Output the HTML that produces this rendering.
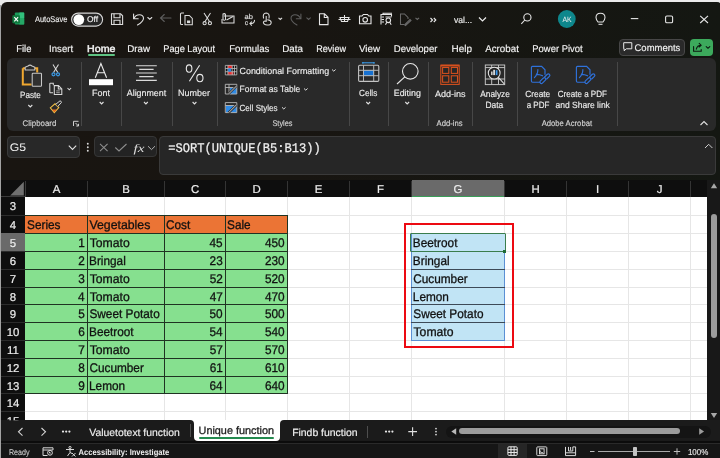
<!DOCTYPE html><html><head><meta charset="utf-8"><style>
*{margin:0;padding:0;box-sizing:border-box}
html,body{width:720px;height:458px;overflow:hidden;background:#ebebeb;font-family:"Liberation Sans",sans-serif}
.a{position:absolute}
#win{position:absolute;left:1px;top:1.8px;width:721px;height:457px;border-top-left-radius:6px;border-top-right-radius:5px;background:linear-gradient(90deg,#191511 0%,#181511 40%,#141712 100%)}
svg#ov{position:absolute;left:0;top:0;text-rendering:geometricPrecision;will-change:transform}
</style></head><body>
<div class="a" style="left:0;top:5px;width:1px;height:453px;background:#a3a3a3"></div>
<div id="win"></div>
<div class="a" style="left:88.00px;top:54.20px;width:27.00px;height:1.90px;background:#5ec383;border-radius:1px"></div>
<div class="a" style="left:619.00px;top:38.50px;width:66.00px;height:17.20px;border:1px solid #474747;border-radius:4px;background:#2a2a2a"></div>
<div class="a" style="left:690.00px;top:38.50px;width:23.00px;height:17.20px;border-radius:4px;background:#3caa5c"></div>
<div class="a" style="left:7.00px;top:58.30px;width:708.60px;height:72.70px;border-radius:6px;background:#292929"></div>
<div class="a" style="left:81.30px;top:62.00px;width:1.00px;height:64.00px;background:#474747"></div>
<div class="a" style="left:120.80px;top:62.00px;width:1.00px;height:64.00px;background:#474747"></div>
<div class="a" style="left:172.40px;top:62.00px;width:1.00px;height:64.00px;background:#474747"></div>
<div class="a" style="left:216.50px;top:62.00px;width:1.00px;height:64.00px;background:#474747"></div>
<div class="a" style="left:348.60px;top:62.00px;width:1.00px;height:64.00px;background:#474747"></div>
<div class="a" style="left:388.00px;top:62.00px;width:1.00px;height:64.00px;background:#474747"></div>
<div class="a" style="left:427.80px;top:62.00px;width:1.00px;height:64.00px;background:#474747"></div>
<div class="a" style="left:472.40px;top:62.00px;width:1.00px;height:64.00px;background:#474747"></div>
<div class="a" style="left:516.80px;top:62.00px;width:1.00px;height:64.00px;background:#474747"></div>
<div class="a" style="left:616.60px;top:62.00px;width:1.00px;height:64.00px;background:#474747"></div>
<div class="a" style="left:7.00px;top:136.00px;width:73.00px;height:21.70px;border:1px solid #3a3a3a;border-radius:4px;background:#282828"></div>
<div class="a" style="left:94.40px;top:136.40px;width:62.30px;height:21.00px;border:1px solid #363636;border-radius:4px;background:#232323"></div>
<div class="a" style="left:159.30px;top:136.40px;width:556.60px;height:38.80px;border:1px solid #3a3a3a;border-radius:4px;background:#262626"></div>
<div class="a" style="left:1.00px;top:180.00px;width:706.00px;height:17.00px;background:#0e0e0e"></div>
<div class="a" style="left:707.00px;top:180.00px;width:13.00px;height:240.30px;background:#181818"></div>
<div class="a" style="left:1.00px;top:197.00px;width:24.00px;height:223.30px;background:#0e0e0e"></div>
<div class="a" style="left:25.00px;top:197.00px;width:682.00px;height:223.30px;background:#ffffff"></div>
<div class="a" style="left:1.00px;top:196.30px;width:24.00px;height:1.00px;background:#3a3a3a"></div>
<div class="a" style="left:24.60px;top:180.50px;width:1.00px;height:16.00px;background:#3a3a3a"></div>
<div class="a" style="left:87.00px;top:181.00px;width:1.00px;height:15.50px;background:#343434"></div>
<div class="a" style="left:164.00px;top:181.00px;width:1.00px;height:15.50px;background:#343434"></div>
<div class="a" style="left:225.00px;top:181.00px;width:1.00px;height:15.50px;background:#343434"></div>
<div class="a" style="left:287.00px;top:181.00px;width:1.00px;height:15.50px;background:#343434"></div>
<div class="a" style="left:349.00px;top:181.00px;width:1.00px;height:15.50px;background:#343434"></div>
<div class="a" style="left:411.00px;top:181.00px;width:1.00px;height:15.50px;background:#343434"></div>
<div class="a" style="left:412.00px;top:180.00px;width:92.00px;height:17.00px;background:#6a6a6a"></div>
<div class="a" style="left:504.00px;top:181.00px;width:1.00px;height:15.50px;background:#343434"></div>
<div class="a" style="left:566.00px;top:181.00px;width:1.00px;height:15.50px;background:#343434"></div>
<div class="a" style="left:628.00px;top:181.00px;width:1.00px;height:15.50px;background:#343434"></div>
<div class="a" style="left:690.00px;top:181.00px;width:1.00px;height:15.50px;background:#343434"></div>
<div class="a" style="left:412.00px;top:195.80px;width:92.00px;height:1.30px;background:#3a9d58"></div>
<div class="a" style="left:1.00px;top:215.00px;width:24.00px;height:1.00px;background:#2c2c2c"></div>
<div class="a" style="left:1.00px;top:233.00px;width:24.00px;height:1.00px;background:#2c2c2c"></div>
<div class="a" style="left:1.00px;top:233.00px;width:24.00px;height:19.00px;background:#6a6a6a"></div>
<div class="a" style="left:1.00px;top:251.00px;width:24.00px;height:1.00px;background:#2c2c2c"></div>
<div class="a" style="left:1.00px;top:269.00px;width:24.00px;height:1.00px;background:#2c2c2c"></div>
<div class="a" style="left:1.00px;top:287.00px;width:24.00px;height:1.00px;background:#2c2c2c"></div>
<div class="a" style="left:1.00px;top:304.00px;width:24.00px;height:1.00px;background:#2c2c2c"></div>
<div class="a" style="left:1.00px;top:322.00px;width:24.00px;height:1.00px;background:#2c2c2c"></div>
<div class="a" style="left:1.00px;top:340.00px;width:24.00px;height:1.00px;background:#2c2c2c"></div>
<div class="a" style="left:1.00px;top:358.00px;width:24.00px;height:1.00px;background:#2c2c2c"></div>
<div class="a" style="left:1.00px;top:376.00px;width:24.00px;height:1.00px;background:#2c2c2c"></div>
<div class="a" style="left:1.00px;top:393.00px;width:24.00px;height:1.00px;background:#2c2c2c"></div>
<div class="a" style="left:1.00px;top:411.00px;width:24.00px;height:1.00px;background:#2c2c2c"></div>
<div class="a" style="left:1.00px;top:429.00px;width:24.00px;height:1.00px;background:#2c2c2c"></div>
<div class="a" style="left:24.50px;top:233.00px;width:1.10px;height:18.00px;background:#3a9d58"></div>
<div class="a" style="left:25.00px;top:215.00px;width:682.00px;height:1.00px;background:#e6e6e6"></div>
<div class="a" style="left:25.00px;top:233.00px;width:682.00px;height:1.00px;background:#e6e6e6"></div>
<div class="a" style="left:25.00px;top:251.00px;width:682.00px;height:1.00px;background:#e6e6e6"></div>
<div class="a" style="left:25.00px;top:269.00px;width:682.00px;height:1.00px;background:#e6e6e6"></div>
<div class="a" style="left:25.00px;top:287.00px;width:682.00px;height:1.00px;background:#e6e6e6"></div>
<div class="a" style="left:25.00px;top:304.00px;width:682.00px;height:1.00px;background:#e6e6e6"></div>
<div class="a" style="left:25.00px;top:322.00px;width:682.00px;height:1.00px;background:#e6e6e6"></div>
<div class="a" style="left:25.00px;top:340.00px;width:682.00px;height:1.00px;background:#e6e6e6"></div>
<div class="a" style="left:25.00px;top:358.00px;width:682.00px;height:1.00px;background:#e6e6e6"></div>
<div class="a" style="left:25.00px;top:376.00px;width:682.00px;height:1.00px;background:#e6e6e6"></div>
<div class="a" style="left:25.00px;top:393.00px;width:682.00px;height:1.00px;background:#e6e6e6"></div>
<div class="a" style="left:25.00px;top:411.00px;width:682.00px;height:1.00px;background:#e6e6e6"></div>
<div class="a" style="left:25.00px;top:429.00px;width:682.00px;height:1.00px;background:#e6e6e6"></div>
<div class="a" style="left:87.00px;top:197.00px;width:1.00px;height:223.30px;background:#e6e6e6"></div>
<div class="a" style="left:164.00px;top:197.00px;width:1.00px;height:223.30px;background:#e6e6e6"></div>
<div class="a" style="left:225.00px;top:197.00px;width:1.00px;height:223.30px;background:#e6e6e6"></div>
<div class="a" style="left:287.00px;top:197.00px;width:1.00px;height:223.30px;background:#e6e6e6"></div>
<div class="a" style="left:349.00px;top:197.00px;width:1.00px;height:223.30px;background:#e6e6e6"></div>
<div class="a" style="left:411.00px;top:197.00px;width:1.00px;height:223.30px;background:#e6e6e6"></div>
<div class="a" style="left:504.00px;top:197.00px;width:1.00px;height:223.30px;background:#e6e6e6"></div>
<div class="a" style="left:566.00px;top:197.00px;width:1.00px;height:223.30px;background:#e6e6e6"></div>
<div class="a" style="left:628.00px;top:197.00px;width:1.00px;height:223.30px;background:#e6e6e6"></div>
<div class="a" style="left:690.00px;top:197.00px;width:1.00px;height:223.30px;background:#e6e6e6"></div>
<div class="a" style="left:25.00px;top:215.00px;width:263.00px;height:18.00px;background:#eb7435"></div>
<div class="a" style="left:25.00px;top:233.00px;width:263.00px;height:160.00px;background:#86e08f"></div>
<div class="a" style="left:25.00px;top:215.00px;width:263.00px;height:1.00px;background:#1f3322"></div>
<div class="a" style="left:25.00px;top:233.00px;width:263.00px;height:1.00px;background:#1f3322"></div>
<div class="a" style="left:25.00px;top:251.00px;width:263.00px;height:1.00px;background:#1f3322"></div>
<div class="a" style="left:25.00px;top:269.00px;width:263.00px;height:1.00px;background:#1f3322"></div>
<div class="a" style="left:25.00px;top:287.00px;width:263.00px;height:1.00px;background:#1f3322"></div>
<div class="a" style="left:25.00px;top:304.00px;width:263.00px;height:1.00px;background:#1f3322"></div>
<div class="a" style="left:25.00px;top:322.00px;width:263.00px;height:1.00px;background:#1f3322"></div>
<div class="a" style="left:25.00px;top:340.00px;width:263.00px;height:1.00px;background:#1f3322"></div>
<div class="a" style="left:25.00px;top:358.00px;width:263.00px;height:1.00px;background:#1f3322"></div>
<div class="a" style="left:25.00px;top:376.00px;width:263.00px;height:1.00px;background:#1f3322"></div>
<div class="a" style="left:25.00px;top:393.00px;width:263.00px;height:1.00px;background:#1f3322"></div>
<div class="a" style="left:87.00px;top:215.00px;width:1.00px;height:179.00px;background:#1f3322"></div>
<div class="a" style="left:164.00px;top:215.00px;width:1.00px;height:179.00px;background:#1f3322"></div>
<div class="a" style="left:225.00px;top:215.00px;width:1.00px;height:179.00px;background:#1f3322"></div>
<div class="a" style="left:287.00px;top:215.00px;width:1.00px;height:179.00px;background:#1f3322"></div>
<div class="a" style="left:411.00px;top:233.00px;width:94.00px;height:108.00px;background:#c1e4f5"></div>
<div class="a" style="left:411.00px;top:233.00px;width:1.00px;height:108.00px;background:#5b90d4"></div>
<div class="a" style="left:504.00px;top:251.00px;width:1.00px;height:90.00px;background:#5b90d4"></div>
<div class="a" style="left:411.00px;top:340.00px;width:94.00px;height:1.00px;background:#5b90d4"></div>
<div class="a" style="left:411.00px;top:251.00px;width:94.00px;height:1.00px;background:#3d4a57"></div>
<div class="a" style="left:411.00px;top:269.00px;width:94.00px;height:1.00px;background:#3d4a57"></div>
<div class="a" style="left:411.00px;top:287.00px;width:94.00px;height:1.00px;background:#3d4a57"></div>
<div class="a" style="left:411.00px;top:304.00px;width:94.00px;height:1.00px;background:#3d4a57"></div>
<div class="a" style="left:411.00px;top:322.00px;width:94.00px;height:1.00px;background:#3d4a57"></div>
<div class="a" style="left:410.00px;top:232.50px;width:96.00px;height:19.40px;border:1.6px solid #3a7d4c;border-radius:1px"></div>
<div class="a" style="left:503.30px;top:249.60px;width:3.20px;height:3.20px;background:#1f6b35"></div>
<div class="a" style="left:404.00px;top:223.00px;width:110.00px;height:125.00px;border:2px solid #ec0a12"></div>
<div class="a" style="left:180.00px;top:420.30px;width:110.00px;height:6.00px;background:#ffffff"></div>
<div class="a" style="left:1.00px;top:420.30px;width:192.50px;height:23.00px;background:#1b1b1b;border-top-right-radius:4px"></div>
<div class="a" style="left:279.60px;top:420.30px;width:441.00px;height:23.00px;background:#1b1b1b;border-top-left-radius:4px"></div>
<div class="a" style="left:193.50px;top:420.00px;width:86.10px;height:21.00px;background:#ffffff;border-radius:0 0 4px 4px"></div>
<div class="a" style="left:199.10px;top:437.00px;width:75.00px;height:2.00px;background:#248a4f;border-radius:1px"></div>
<div class="a" style="left:190.00px;top:424.00px;width:1.00px;height:13.00px;background:#4e4e4e"></div>
<div class="a" style="left:367.30px;top:425.60px;width:1.00px;height:12.40px;background:#4e4e4e"></div>
<div class="a" style="left:446.00px;top:425.50px;width:265.00px;height:12.50px;border-radius:6px;background:#141414"></div>
<div class="a" style="left:459.40px;top:428.30px;width:220.60px;height:6.20px;border-radius:3.1px;background:#9c9c9c"></div>
<div class="a" style="left:710.60px;top:214.00px;width:6.00px;height:124.30px;border-radius:3px;background:#9c9c9c"></div>
<div class="a" style="left:1.00px;top:441.00px;width:719.00px;height:2.30px;background:#0c0c0c"></div>
<div class="a" style="left:1.00px;top:443.20px;width:719.00px;height:1.00px;background:#2a2a2a"></div>
<div class="a" style="left:1.00px;top:444.20px;width:719.00px;height:14.00px;background:#161616"></div>
<div class="a" style="left:498.20px;top:443.90px;width:29.10px;height:14.10px;background:#262626"></div>
<div class="a" style="left:598.00px;top:451.00px;width:72.00px;height:1.00px;background:#a8a8a8"></div>
<div class="a" style="left:633.00px;top:447.00px;width:4.20px;height:9.00px;background:#c4c4c4;border-radius:0.8px"></div>
<svg id="ov" width="720" height="458" viewBox="0 0 720 458">
<defs><clipPath id="gc"><rect x="0" y="180" width="720" height="240.3"/></clipPath></defs>
<g>
 <rect x="14.8" y="12.6" width="9.4" height="11.9" rx="1" fill="#1b9a5a"/>
 <rect x="19.3" y="12.6" width="4.9" height="6" rx="0.5" fill="#33c07c"/>
 <rect x="19.3" y="18.6" width="4.9" height="5.9" rx="0.5" fill="#25a866"/>
 <rect x="12.4" y="15.3" width="7.6" height="7.9" rx="0.8" fill="#0f7a3e"/>
 <path d="M14.3 17.2 L18.1 21.3 M18.1 17.2 L14.3 21.3" stroke="#fff" stroke-width="1.15"/>
</g>
<text x="34.99" y="22.30" font-family="Liberation Sans" font-size="8.4" fill="#ececec" textLength="32.35" lengthAdjust="spacingAndGlyphs" stroke="#ececec" stroke-width="0.14">AutoSave</text>
<rect x="71.6" y="13.1" width="31" height="13" rx="6.5" fill="#262626" stroke="#d6d6d6" stroke-width="1.1"/>
<circle cx="78.8" cy="19.6" r="5.4" fill="#ffffff"/>
<text x="86.91" y="22.30" font-family="Liberation Sans" font-size="8.4" fill="#f0f0f0" textLength="11.08" lengthAdjust="spacingAndGlyphs" stroke="#f0f0f0" stroke-width="0.14">Off</text>
<g fill="none" stroke="#dcdcdc" stroke-width="1.1">
 <path d="M111.5 13.8 H120.6 L122.6 15.8 V24.5 H111.5 Z"/>
 <path d="M114 13.8 V17.8 H120 V13.8"/>
 <path d="M114 24.5 V20.3 H120 V24.5"/>
</g>
<g fill="none" stroke="#e2e2e2" stroke-width="1.1" stroke-linecap="round">
 <path d="M134 18.5 C136 13.5 143.5 13.6 143.5 18.2 C143.5 20.5 140 23.5 137.5 25"/>
 <path d="M133.6 14 V18.8 H138.2"/>
 <path d="M147.8 17.5 L149.8 19.3 L151.8 17.5"/>
</g>
<g fill="none" stroke="#5e5e5e" stroke-width="1.1" stroke-linecap="round">
 <path d="M160.5 18 H171 M164.3 14.5 L160.5 18 L164.3 21.5"/>
</g>
<g fill="none" stroke="#dcdcdc" stroke-width="1.05">
 <path d="M183 24.5 H181.3 Q180.5 24.5 180.5 23.5 V14 Q180.5 13 181.5 13 H184"/>
 <path d="M185 15.5 H189.3 L192.3 18.5 V24.8 H185 Z"/>
 <rect x="187" y="20.5" width="3.2" height="2.6" fill="#dcdcdc" stroke="none"/>
</g>
<g fill="none" stroke="#dcdcdc" stroke-width="1.05">
 <path d="M204 13 L209.5 21.5 M210.5 13 L205 21.5"/>
 <circle cx="204.6" cy="23.2" r="1.6"/><circle cx="209.9" cy="23.2" r="1.6"/>
</g>
<g fill="none" stroke="#dcdcdc" stroke-width="1.05">
 <path d="M224 16 H234 V23 H222 V19"/>
 <path d="M223 14 Q224.5 13 225.5 14.5 V19.5 Q224.3 21 223 19.5 Z"/>
 <path d="M226.5 20 L233 16.5"/>
</g>
<text x="244.58" y="18.70" font-family="Liberation Sans" font-size="7" fill="#e0e0e0" textLength="8.33" lengthAdjust="spacingAndGlyphs" stroke="#e0e0e0" stroke-width="0.14">ab</text>
<text x="244.72" y="24.60" font-family="Liberation Sans" font-size="7" fill="#e0e0e0" textLength="3.25" lengthAdjust="spacingAndGlyphs" stroke="#e0e0e0" stroke-width="0.14">c</text>
<g fill="none" stroke="#e0e0e0" stroke-width="1.05" stroke-linecap="round">
 <path d="M254.5 20.2 Q254.5 23.6 250 23.6 M251.6 21.9 L249.9 23.6 L251.6 25.3"/>
</g>
<g fill="none" stroke="#dcdcdc" stroke-width="1.05">
 <path d="M263.6 18.5 Q262.3 13.2 266.2 13 Q270 13.2 269 18.5"/>
 <path d="M266.2 16 V21.3 Q263.5 20.6 263.4 22.6 Q264 25 267 25 H268.8 Q271.2 24.8 271.2 22.2 Q271 20.2 267.3 19.8"/>
 <path d="M278.5 17.8 L280.3 19.5 L282.1 17.8"/>
</g>
<g fill="none" stroke="#5e5e5e" stroke-width="1.05" stroke-linecap="round">
 <path d="M300.5 18.5 C298.5 13.5 291 13.6 291 18.2 C291 20.5 294.5 23.5 297 25"/>
 <path d="M300.9 14 V18.8 H296.3"/>
 <path d="M306.8 17.8 L308.6 19.5 L310.4 17.8"/>
</g>
<g fill="none" stroke="#e6e6e6" stroke-width="1.1">
 <path d="M319.5 13.8 H324.5 L328 17.3 V24.6 H319.5 Z M324.3 14 V17.5 H328"/>
</g>
<g fill="none" stroke="#e6e6e6" stroke-width="1.05">
 <path d="M338.5 19.5 H350.5 M344.5 15 V22 M340 17.5 H349 L347.5 21.5 H341.5 Z"/>
</g>
<g fill="none" stroke="#e6e6e6" stroke-width="1.1">
 <path d="M359.5 16 H362 L363.3 14.5 H367.5 L368.8 16 H371 V23.8 H359.5 Z"/>
 <circle cx="365.2" cy="19.8" r="2.3"/>
</g>
<g fill="none" stroke="#e6e6e6" stroke-width="1.05">
 <path d="M381 24.5 V14.5 H391.5 V16.5"/>
 <path d="M383 14.5 V13.3 H392 M381.5 17 H384 M381.5 19.5 H384 M381.5 22 H384"/>
 <circle cx="388.3" cy="20.3" r="2.3"/>
 <path d="M385.5 24.8 L386.8 22.3 M391.2 24.8 L389.8 22.3 M385.5 17 H391.5"/>
</g>
<g fill="none" stroke="#6a6a6a" stroke-width="1.05">
 <path d="M404 24.5 H400.5 V14 H404.5 L408 17.5 V19"/>
 <path d="M404.5 24.8 L410 19.5 L411 20.5 L405.5 25.5 Z"/>
 <path d="M415.5 17.8 L417.3 19.5 L419.1 17.8"/>
</g>
<path d="M430.5 18 L432.5 20 L430.5 22 M433.8 18 L435.8 20 L433.8 22" fill="none" stroke="#ececec" stroke-width="1.1"/>
<text x="453.97" y="22.80" font-family="Liberation Sans" font-size="8.8" fill="#ececec" textLength="18.11" lengthAdjust="spacingAndGlyphs" stroke="#ececec" stroke-width="0.14">val...</text>
<path d="M479 17.5 L482.5 21 L486 17.5" fill="none" stroke="#ececec" stroke-width="1.2"/>
<g fill="none" stroke="#e6e6e6" stroke-width="1.1"><circle cx="527.4" cy="17.4" r="3.6"/><path d="M524.8 20 L521.3 23.9"/></g>
<circle cx="566.8" cy="19" r="8.9" fill="#0e878c"/>
<text x="562.39" y="22.00" font-family="Liberation Sans" font-size="7.6" fill="#f2f2f2" textLength="9.19" lengthAdjust="spacingAndGlyphs" >AK</text>
<g fill="none" stroke="#e6e6e6" stroke-width="1.05">
 <path d="M598 22 Q596 19.5 596 17.5 Q596 13.2 600.5 13.2 Q605 13.2 605 17.5 Q605 19.5 603 22 Z"/>
 <path d="M598.5 24.3 H602.5"/>
</g>
<path d="M630.8 18.6 H638.3" stroke="#e6e6e6" stroke-width="1.1"/>
<rect x="665.6" y="16" width="7" height="6.8" rx="1.3" fill="none" stroke="#e6e6e6" stroke-width="1.1"/>
<path d="M700.2 15.8 L708 23 M708 15.8 L700.2 23" stroke="#e6e6e6" stroke-width="1.1"/>
<text x="16.23" y="51.70" font-family="Liberation Sans" font-size="9.9" fill="#f4f4f4" textLength="15.19" lengthAdjust="spacingAndGlyphs" stroke="#f4f4f4" stroke-width="0.14">File</text>
<text x="49.12" y="51.70" font-family="Liberation Sans" font-size="9.9" fill="#f4f4f4" textLength="23.95" lengthAdjust="spacingAndGlyphs" stroke="#f4f4f4" stroke-width="0.14">Insert</text>
<text x="87.13" y="51.70" font-family="Liberation Sans" font-size="9.9" fill="#f4f4f4" textLength="28.34" lengthAdjust="spacingAndGlyphs" stroke="#f0f0f0" stroke-width="0.45">Home</text>
<text x="127.20" y="51.70" font-family="Liberation Sans" font-size="9.9" fill="#f4f4f4" textLength="22.78" lengthAdjust="spacingAndGlyphs" stroke="#f4f4f4" stroke-width="0.14">Draw</text>
<text x="163.24" y="51.70" font-family="Liberation Sans" font-size="9.9" fill="#f4f4f4" textLength="51.82" lengthAdjust="spacingAndGlyphs" stroke="#f4f4f4" stroke-width="0.14">Page Layout</text>
<text x="229.21" y="51.70" font-family="Liberation Sans" font-size="9.9" fill="#f4f4f4" textLength="40.14" lengthAdjust="spacingAndGlyphs" stroke="#f4f4f4" stroke-width="0.14">Formulas</text>
<text x="282.19" y="51.70" font-family="Liberation Sans" font-size="9.9" fill="#f4f4f4" textLength="20.81" lengthAdjust="spacingAndGlyphs" stroke="#f4f4f4" stroke-width="0.14">Data</text>
<text x="316.26" y="51.70" font-family="Liberation Sans" font-size="9.9" fill="#f4f4f4" textLength="29.72" lengthAdjust="spacingAndGlyphs" stroke="#f4f4f4" stroke-width="0.14">Review</text>
<text x="358.96" y="51.70" font-family="Liberation Sans" font-size="9.9" fill="#f4f4f4" textLength="21.02" lengthAdjust="spacingAndGlyphs" stroke="#f4f4f4" stroke-width="0.14">View</text>
<text x="393.71" y="51.70" font-family="Liberation Sans" font-size="9.9" fill="#f4f4f4" textLength="43.75" lengthAdjust="spacingAndGlyphs" stroke="#f4f4f4" stroke-width="0.14">Developer</text>
<text x="451.49" y="51.70" font-family="Liberation Sans" font-size="9.9" fill="#f4f4f4" textLength="20.43" lengthAdjust="spacingAndGlyphs" stroke="#f4f4f4" stroke-width="0.14">Help</text>
<text x="485.18" y="51.70" font-family="Liberation Sans" font-size="9.9" fill="#f4f4f4" textLength="33.69" lengthAdjust="spacingAndGlyphs" stroke="#f4f4f4" stroke-width="0.14">Acrobat</text>
<text x="532.33" y="51.70" font-family="Liberation Sans" font-size="9.9" fill="#f4f4f4" textLength="50.34" lengthAdjust="spacingAndGlyphs" stroke="#f4f4f4" stroke-width="0.14">Power Pivot</text>
<g fill="none" stroke="#e8e8e8" stroke-width="1"><path d="M623.7 42.7 H631.8 V48.8 H626.3 L624.2 50.8 V48.8 H623.7 Z"/></g>
<text x="634.52" y="50.80" font-family="Liberation Sans" font-size="9.6" fill="#f2f2f2" textLength="45.82" lengthAdjust="spacingAndGlyphs" stroke="#f2f2f2" stroke-width="0.14">Comments</text>
<g fill="none" stroke="#0c1a10" stroke-width="1.1" stroke-linecap="round"><path d="M693.6 46.6 V51.2 H701.2 V49.6 M696.3 49.2 Q697.2 45.2 701 45.2 M699.2 43.4 L701.1 45.2 L699.2 47"/><path d="M706.2 46.6 L708 48.3 L709.8 46.6"/></g>
<g>
 <path d="M22.8 68.2 H25 M35 68.2 H37.2 V72.5 M22.8 68.2 V84.6 H31.5" fill="none" stroke="#f0a830" stroke-width="2"/>
 <path d="M25.2 70 V67.2 Q27 66.5 28 66 Q30 64.3 32 66 Q33 66.5 34.8 67.2 V70 Z" fill="none" stroke="#c8c8c8" stroke-width="1.05"/>
 <rect x="32.2" y="73.2" width="9.3" height="13" rx="0.8" fill="#303030" stroke="#c8c8c8" stroke-width="1.05"/>
</g>
<text x="20.04" y="97.70" font-family="Liberation Sans" font-size="9.0" fill="#ececec" textLength="20.72" lengthAdjust="spacingAndGlyphs" stroke="#ececec" stroke-width="0.14">Paste</text>
<path d="M28.3 105 L30.3 107 L32.3 105" fill="none" stroke="#e0e0e0" stroke-width="1.1"/>
<g fill="none" stroke-width="1.05">
 <path d="M53 64.5 L57.8 72.5 M58.5 64.5 L53.5 72.5" stroke="#d8d8d8"/>
 <circle cx="53.5" cy="74.3" r="1.5" stroke="#3b9be8" stroke-width="1.2"/><circle cx="58" cy="74.3" r="1.5" stroke="#3b9be8" stroke-width="1.2"/>
</g>
<g fill="none" stroke="#d8d8d8" stroke-width="1.05">
 <path d="M53 92.8 H50.3 Q49.8 92.8 49.8 92.3 V83.8 Q49.8 83.3 50.3 83.3 H53.3 V85.3"/>
 <path d="M54.3 85.6 H58.5 L61.8 88.9 V94.4 H54.3 Z M58.3 85.8 V89 H61.6"/>
 <path d="M56.2 90.8 H59.8 M56.2 92.6 H59.8" stroke="#8a8a8a" stroke-width="1.2"/>
 <path d="M67.5 88 L69.3 89.8 L71.1 88"/>
</g>
<g>
 <path d="M50.3 107.8 L55 103.8 L58.8 107.6 L54.3 112.6 Z" fill="#2a2a2a" stroke="#f2c048" stroke-width="1.05"/>
 <path d="M52 109.6 L56.8 109.6 L54.3 112.2 Z" fill="#ea6a1e"/>
 <path d="M55.8 104.3 L60 100.8 Q61.6 101.2 61.4 102.6 L57.8 106.4" fill="#2a2a2a" stroke="#d8d8d8" stroke-width="1"/>
</g>
<text x="22.60" y="125.80" font-family="Liberation Sans" font-size="8.2" fill="#d4d4d4" textLength="33.71" lengthAdjust="spacingAndGlyphs" stroke="#d4d4d4" stroke-width="0.14">Clipboard</text>
<g fill="none" stroke="#cfcfcf" stroke-width="1"><path d="M73.5 126 V121.3 H78.5 M75.5 123 L78.5 126 M78.5 123.8 V126 H76.3"/></g>
<g fill="none" stroke="#ececec" stroke-width="1.1">
 <path d="M95.3 77.8 L100.9 63.6 L106.6 77.8 M97.2 72.8 H104.7"/>
</g>
<rect x="89" y="79.2" width="24" height="6" fill="#ffffff"/>
<text x="91.97" y="95.50" font-family="Liberation Sans" font-size="9.0" fill="#ececec" textLength="17.90" lengthAdjust="spacingAndGlyphs" stroke="#ececec" stroke-width="0.14">Font</text>
<path d="M99.7 102 L101.6 104 L103.5 102" fill="none" stroke="#e0e0e0" stroke-width="1.1"/>
<g stroke="#dadada" stroke-width="1.15">
 <path d="M136 65.7 H156.8 M139.2 69.4 H153.6 M136 73 H156.8 M139.2 76.6 H153.6 M136 80.4 H156.8"/>
</g>
<text x="126.78" y="95.50" font-family="Liberation Sans" font-size="9.0" fill="#ececec" textLength="39.38" lengthAdjust="spacingAndGlyphs" stroke="#ececec" stroke-width="0.14">Alignment</text>
<path d="M144 102 L145.9 104 L147.8 102" fill="none" stroke="#e0e0e0" stroke-width="1.1"/>
<g fill="none" stroke="#ececec" stroke-width="1.1">
 <ellipse cx="189.1" cy="68.6" rx="2.8" ry="3.7"/><ellipse cx="199.9" cy="78.1" rx="3.1" ry="3.7"/>
 <path d="M199.6 65.2 L189.4 81.3"/>
</g>
<text x="178.06" y="95.50" font-family="Liberation Sans" font-size="9.0" fill="#ececec" textLength="31.88" lengthAdjust="spacingAndGlyphs" stroke="#ececec" stroke-width="0.14">Number</text>
<path d="M192.6 102 L194.5 104 L196.4 102" fill="none" stroke="#e0e0e0" stroke-width="1.1"/>
<g>
 <rect x="225.3" y="65.2" width="11.5" height="9.5" fill="#151515"/>
 <rect x="227.9" y="65.2" width="4.3" height="3" fill="#f02a2a"/>
 <rect x="227.9" y="71.9" width="5.6" height="2.8" fill="#f02a2a"/>
 <path d="M225.3 65.4 H236.8 V74.9 H225.3 Z M225.3 68.5 H236.8 M225.3 71.7 H236.8 M227.9 65.4 V74.9 M232.2 65.4 V74.9 M234.5 65.4 V74.9" fill="none" stroke="#c0c0c0" stroke-width="0.8"/>
 <circle cx="229.6" cy="70" r="1.7" fill="#2a86e8"/>
</g>
<text x="239.55" y="73.60" font-family="Liberation Sans" font-size="9.0" fill="#ececec" textLength="89.53" lengthAdjust="spacingAndGlyphs" stroke="#ececec" stroke-width="0.14">Conditional Formatting</text>
<path d="M332 69.5 L333.8 71.2 L335.6 69.5" fill="none" stroke="#e0e0e0" stroke-width="1"/>
<g>
 <rect x="230" y="87.5" width="6.8" height="6.6" fill="#2f8be6"/>
 <path d="M225.3 84.3 H236.8 V94 H225.3 Z M225.3 87.5 H236.8 M229 84.3 V94" fill="none" stroke="#b8b8b8" stroke-width="0.9"/>
 <path d="M228.5 94 L236.5 86" stroke="#303030" stroke-width="2.4"/>
 <path d="M228.5 94 L236.5 86" stroke="#c8c8c8" stroke-width="1"/>
</g>
<text x="239.62" y="92.00" font-family="Liberation Sans" font-size="9.0" fill="#ececec" textLength="60.65" lengthAdjust="spacingAndGlyphs" stroke="#ececec" stroke-width="0.14">Format as Table</text>
<path d="M304 88.5 L305.8 90.2 L307.6 88.5" fill="none" stroke="#e0e0e0" stroke-width="1"/>
<g>
 <rect x="226" y="105.5" width="10.8" height="7.2" fill="#2f8be6"/>
 <path d="M225.3 102.6 H236.8 V112.6 H225.3 Z M225.3 105.5 H236.8" fill="none" stroke="#b8b8b8" stroke-width="0.9"/>
 <path d="M228.5 112.8 L236.5 104.8" stroke="#303030" stroke-width="2.4"/>
 <path d="M228.5 112.8 L236.5 104.8" stroke="#c8c8c8" stroke-width="1"/>
</g>
<text x="239.59" y="110.80" font-family="Liberation Sans" font-size="9.0" fill="#ececec" textLength="37.90" lengthAdjust="spacingAndGlyphs" stroke="#ececec" stroke-width="0.14">Cell Styles</text>
<path d="M282 107.3 L283.8 109 L285.6 107.3" fill="none" stroke="#e0e0e0" stroke-width="1"/>
<text x="272.47" y="126.30" font-family="Liberation Sans" font-size="8.2" fill="#d4d4d4" textLength="20.00" lengthAdjust="spacingAndGlyphs" stroke="#d4d4d4" stroke-width="0.14">Styles</text>
<g>
 <path d="M362.8 62.8 H374" stroke="#3b9be8" stroke-width="1.1"/>
 <circle cx="362.8" cy="62.8" r="0.9" fill="#3b9be8"/><circle cx="374" cy="62.8" r="0.9" fill="#3b9be8"/>
 <rect x="363.6" y="70.5" width="10" height="5.1" fill="#1670d0" stroke="#4aa3f0" stroke-width="0.6"/>
 <rect x="358.6" y="65.3" width="20.2" height="16.1" rx="1.2" fill="none" stroke="#c4c4c4" stroke-width="1.1"/>
 <path d="M358.6 70.3 H378.8 M358.6 75.7 H378.8 M363.5 65.3 V81.4 M373.7 65.3 V81.4" fill="none" stroke="#bdbdbd" stroke-width="0.95"/>
</g>
<text x="359.08" y="95.50" font-family="Liberation Sans" font-size="9.0" fill="#ececec" textLength="18.21" lengthAdjust="spacingAndGlyphs" stroke="#ececec" stroke-width="0.14">Cells</text>
<path d="M366.3 102 L368.2 104 L370.1 102" fill="none" stroke="#e0e0e0" stroke-width="1.1"/>
<g fill="none" stroke="#e6e6e6" stroke-width="1.1"><circle cx="410.3" cy="71.3" r="7.8"/><path d="M404.8 76.8 L397 84"/></g>
<text x="393.77" y="95.50" font-family="Liberation Sans" font-size="9.0" fill="#ececec" textLength="27.10" lengthAdjust="spacingAndGlyphs" stroke="#ececec" stroke-width="0.14">Editing</text>
<path d="M405.3 102 L407.2 104 L409.1 102" fill="none" stroke="#e0e0e0" stroke-width="1.1"/>
<g fill="none" stroke="#d8501e" stroke-width="1.05">
 <rect x="440.8" y="65.2" width="18.4" height="19.2" fill="#262626"/>
 <path d="M440.8 65.6 H459.2" stroke-width="1.8"/>
 <rect x="442.6" y="67.5" width="6.2" height="5.9"/><rect x="451.3" y="67.5" width="6.2" height="5.9"/>
 <rect x="442.6" y="75.8" width="6.2" height="6.4"/><rect x="451.3" y="75.8" width="6.2" height="6.4"/>
</g>
<text x="434.98" y="97.00" font-family="Liberation Sans" font-size="9.0" fill="#ececec" textLength="30.64" lengthAdjust="spacingAndGlyphs" stroke="#ececec" stroke-width="0.14">Add-ins</text>
<text x="436.59" y="126.30" font-family="Liberation Sans" font-size="8.2" fill="#d4d4d4" textLength="25.99" lengthAdjust="spacingAndGlyphs" stroke="#d4d4d4" stroke-width="0.14">Add-ins</text>
<g fill="none" stroke="#c8c8c8" stroke-width="0.95">
 <rect x="485.3" y="65" width="19.4" height="19.6"/>
 <path d="M485.3 67.6 H504.7 M485.3 79 H504.7 M491.7 65 V84.6 M498.5 65 V84.6"/>
</g>
<circle cx="494.2" cy="73.1" r="5.9" fill="#222" stroke="#e2e2e2" stroke-width="1.05"/>
<path d="M498.6 77.6 L504.3 84" stroke="#e2e2e2" stroke-width="1.1"/>
<rect x="491" y="71.5" width="1.6" height="3.6" fill="#c8c8c8"/><rect x="493.2" y="69.8" width="1.8" height="5.3" fill="#d8d8d8"/><rect x="495.7" y="70.2" width="1.8" height="4.9" fill="#3a96ea"/>

<text x="480.28" y="96.90" font-family="Liberation Sans" font-size="9.0" fill="#ececec" textLength="29.59" lengthAdjust="spacingAndGlyphs" stroke="#ececec" stroke-width="0.14">Analyze</text>
<text x="485.51" y="107.90" font-family="Liberation Sans" font-size="9.0" fill="#ececec" textLength="17.79" lengthAdjust="spacingAndGlyphs" stroke="#ececec" stroke-width="0.14">Data</text>
<g fill="none" stroke="#2f72dc" stroke-width="1.15" stroke-linecap="round" transform="translate(0,0)">
 <path d="M539.5 82.2 H532.6 Q531.4 82.2 531.4 81 V67.5 Q531.4 66.3 532.6 66.3 H541.6 L545 69.8 V74.3"/>
 <path d="M537.9 69.6 Q537.8 74.6 534.4 77.6 M536.3 74.3 Q539.8 74.3 542.6 75.8"/>
 <path d="M540.2 81.2 L543.2 78.2 Q544.4 77.2 545.4 78.2 Q546.4 79.2 545.4 80.2 L542.4 83.2 Q541.4 84.2 540.4 83.2 Q539.4 82.2 540.2 81.2 Z"/>
 <path d="M544.6 77 L547.3 74.3 Q548.4 73.4 549.4 74.3 Q550.4 75.3 549.4 76.3 L546.7 79"/>
</g>
<g fill="none" stroke="#2f72dc" stroke-width="1.15" stroke-linecap="round" transform="translate(45,0)">
 <path d="M539.5 82.2 H532.6 Q531.4 82.2 531.4 81 V67.5 Q531.4 66.3 532.6 66.3 H541.6 L545 69.8 V74.3"/>
 <path d="M537.9 69.6 Q537.8 74.6 534.4 77.6 M536.3 74.3 Q539.8 74.3 542.6 75.8"/>
 <path d="M540.2 81.2 L543.2 78.2 Q544.4 77.2 545.4 78.2 Q546.4 79.2 545.4 80.2 L542.4 83.2 Q541.4 84.2 540.4 83.2 Q539.4 82.2 540.2 81.2 Z"/>
 <path d="M544.6 77 L547.3 74.3 Q548.4 73.4 549.4 74.3 Q550.4 75.3 549.4 76.3 L546.7 79"/>
</g>
<text x="525.18" y="96.90" font-family="Liberation Sans" font-size="9.0" fill="#ececec" textLength="25.10" lengthAdjust="spacingAndGlyphs" stroke="#ececec" stroke-width="0.14">Create</text>
<text x="526.66" y="108.20" font-family="Liberation Sans" font-size="9.0" fill="#ececec" textLength="22.66" lengthAdjust="spacingAndGlyphs" stroke="#ececec" stroke-width="0.14">a PDF</text>
<text x="557.69" y="96.90" font-family="Liberation Sans" font-size="9.0" fill="#ececec" textLength="49.33" lengthAdjust="spacingAndGlyphs" stroke="#ececec" stroke-width="0.14">Create a PDF</text>
<text x="555.44" y="108.20" font-family="Liberation Sans" font-size="9.0" fill="#ececec" textLength="54.45" lengthAdjust="spacingAndGlyphs" stroke="#ececec" stroke-width="0.14">and Share link</text>
<text x="541.69" y="126.30" font-family="Liberation Sans" font-size="8.2" fill="#d4d4d4" textLength="50.37" lengthAdjust="spacingAndGlyphs" stroke="#d4d4d4" stroke-width="0.14">Adobe Acrobat</text>
<path d="M700.5 125 L704 121.5 L707.5 125" fill="none" stroke="#e0e0e0" stroke-width="1.1"/>
<text x="9.68" y="151.30" font-family="Liberation Sans" font-size="11" fill="#f0f0f0" textLength="16.33" lengthAdjust="spacingAndGlyphs" >G5</text>
<path d="M68.8 145.6 L72.5 149.4 L76.2 145.6" fill="none" stroke="#e0e0e0" stroke-width="1.1"/>
<g fill="#d8d8d8"><circle cx="87.8" cy="143.8" r="0.95"/><circle cx="87.8" cy="147.3" r="0.95"/><circle cx="87.8" cy="150.8" r="0.95"/></g>
<path d="M100 143.8 L107.6 151.2 M107.6 143.8 L100 151.2" stroke="#8e8e8e" stroke-width="1.05"/>
<path d="M115.3 147.5 L119 151 L126.5 144" fill="none" stroke="#8e8e8e" stroke-width="1.05"/>
<text x="133.5" y="151.5" font-family="Liberation Serif" font-style="italic" font-size="11.5" fill="#dcdcdc" textLength="11" lengthAdjust="spacingAndGlyphs">fx</text>
<path d="M148 146.2 L151.5 149.6 L155 146.2" fill="none" stroke="#b0b0b0" stroke-width="1"/>
<text x="168.31" y="152.00" font-family="Liberation Mono" font-size="13.2" fill="#f0f0f0" textLength="152.42" lengthAdjust="spacingAndGlyphs" stroke="#f0f0f0" stroke-width="0.25">=SORT(UNIQUE(B5:B13))</text>
<path d="M705 148 L708.7 144.3 L712.4 148" fill="none" stroke="#d0d0d0" stroke-width="1"/>
<path d="M10.2 195.4 L23.8 195.4 L23.8 181.8 Z" fill="#707070"/>
<text x="56.50" y="193.4" text-anchor="middle" font-family="Liberation Sans" font-size="11.4" fill="#ececec" stroke="#ececec" stroke-width="0.2">A</text>
<text x="126.00" y="193.4" text-anchor="middle" font-family="Liberation Sans" font-size="11.4" fill="#ececec" stroke="#ececec" stroke-width="0.2">B</text>
<text x="195.00" y="193.4" text-anchor="middle" font-family="Liberation Sans" font-size="11.4" fill="#ececec" stroke="#ececec" stroke-width="0.2">C</text>
<text x="256.50" y="193.4" text-anchor="middle" font-family="Liberation Sans" font-size="11.4" fill="#ececec" stroke="#ececec" stroke-width="0.2">D</text>
<text x="318.50" y="193.4" text-anchor="middle" font-family="Liberation Sans" font-size="11.4" fill="#ececec" stroke="#ececec" stroke-width="0.2">E</text>
<text x="380.50" y="193.4" text-anchor="middle" font-family="Liberation Sans" font-size="11.4" fill="#ececec" stroke="#ececec" stroke-width="0.2">F</text>
<text x="458.00" y="193.4" text-anchor="middle" font-family="Liberation Sans" font-size="11.4" fill="#ececec" stroke="#ececec" stroke-width="0.2">G</text>
<text x="535.50" y="193.4" text-anchor="middle" font-family="Liberation Sans" font-size="11.4" fill="#ececec" stroke="#ececec" stroke-width="0.2">H</text>
<text x="597.50" y="193.4" text-anchor="middle" font-family="Liberation Sans" font-size="11.4" fill="#ececec" stroke="#ececec" stroke-width="0.2">I</text>
<text x="659.50" y="193.4" text-anchor="middle" font-family="Liberation Sans" font-size="11.4" fill="#ececec" stroke="#ececec" stroke-width="0.2">J</text>
<text x="13" y="209.80" text-anchor="middle" font-family="Liberation Sans" font-size="11.4" fill="#ececec" stroke="#ececec" stroke-width="0.2" clip-path="url(#gc)">3</text>
<text x="13" y="228.80" text-anchor="middle" font-family="Liberation Sans" font-size="11.4" fill="#ececec" stroke="#ececec" stroke-width="0.2" clip-path="url(#gc)">4</text>
<text x="13" y="246.80" text-anchor="middle" font-family="Liberation Sans" font-size="11.4" fill="#ececec" stroke="#ececec" stroke-width="0.2" clip-path="url(#gc)">5</text>
<text x="13" y="264.80" text-anchor="middle" font-family="Liberation Sans" font-size="11.4" fill="#ececec" stroke="#ececec" stroke-width="0.2" clip-path="url(#gc)">6</text>
<text x="13" y="282.80" text-anchor="middle" font-family="Liberation Sans" font-size="11.4" fill="#ececec" stroke="#ececec" stroke-width="0.2" clip-path="url(#gc)">7</text>
<text x="13" y="300.80" text-anchor="middle" font-family="Liberation Sans" font-size="11.4" fill="#ececec" stroke="#ececec" stroke-width="0.2" clip-path="url(#gc)">8</text>
<text x="13" y="317.80" text-anchor="middle" font-family="Liberation Sans" font-size="11.4" fill="#ececec" stroke="#ececec" stroke-width="0.2" clip-path="url(#gc)">9</text>
<text x="13" y="335.80" text-anchor="middle" font-family="Liberation Sans" font-size="11.4" fill="#ececec" stroke="#ececec" stroke-width="0.2" clip-path="url(#gc)">10</text>
<text x="13" y="353.80" text-anchor="middle" font-family="Liberation Sans" font-size="11.4" fill="#ececec" stroke="#ececec" stroke-width="0.2" clip-path="url(#gc)">11</text>
<text x="13" y="371.80" text-anchor="middle" font-family="Liberation Sans" font-size="11.4" fill="#ececec" stroke="#ececec" stroke-width="0.2" clip-path="url(#gc)">12</text>
<text x="13" y="389.80" text-anchor="middle" font-family="Liberation Sans" font-size="11.4" fill="#ececec" stroke="#ececec" stroke-width="0.2" clip-path="url(#gc)">13</text>
<text x="13" y="406.80" text-anchor="middle" font-family="Liberation Sans" font-size="11.4" fill="#ececec" stroke="#ececec" stroke-width="0.2" clip-path="url(#gc)">14</text>
<text x="13" y="424.80" text-anchor="middle" font-family="Liberation Sans" font-size="11.4" fill="#ececec" stroke="#ececec" stroke-width="0.2" clip-path="url(#gc)">15</text>
<text x="27.06" y="229.10" font-family="Liberation Sans" font-size="12.5" fill="#111" textLength="33.48" lengthAdjust="spacingAndGlyphs" stroke="#111" stroke-width="0.3">Series</text>
<text x="89.45" y="229.10" font-family="Liberation Sans" font-size="12.5" fill="#111" textLength="60.89" lengthAdjust="spacingAndGlyphs" stroke="#111" stroke-width="0.3">Vegetables</text>
<text x="166.00" y="229.10" font-family="Liberation Sans" font-size="12.5" fill="#111" textLength="24.29" lengthAdjust="spacingAndGlyphs" stroke="#111" stroke-width="0.3">Cost</text>
<text x="227.06" y="229.10" font-family="Liberation Sans" font-size="12.5" fill="#111" textLength="23.64" lengthAdjust="spacingAndGlyphs" stroke="#111" stroke-width="0.3">Sale</text>
<text x="78.21" y="246.90" font-family="Liberation Sans" font-size="12.5" fill="#111" textLength="6.57" lengthAdjust="spacingAndGlyphs" stroke="#111" stroke-width="0.3">1</text>
<text x="89.73" y="246.90" font-family="Liberation Sans" font-size="12.5" fill="#111" textLength="40.05" lengthAdjust="spacingAndGlyphs" stroke="#111" stroke-width="0.3">Tomato</text>
<text x="209.56" y="246.90" font-family="Liberation Sans" font-size="12.5" fill="#111" textLength="13.14" lengthAdjust="spacingAndGlyphs" stroke="#111" stroke-width="0.3">45</text>
<text x="264.95" y="246.90" font-family="Liberation Sans" font-size="12.5" fill="#111" textLength="19.71" lengthAdjust="spacingAndGlyphs" stroke="#111" stroke-width="0.3">450</text>
<text x="78.22" y="264.90" font-family="Liberation Sans" font-size="12.5" fill="#111" textLength="6.57" lengthAdjust="spacingAndGlyphs" stroke="#111" stroke-width="0.3">2</text>
<text x="89.03" y="264.90" font-family="Liberation Sans" font-size="12.5" fill="#111" textLength="36.77" lengthAdjust="spacingAndGlyphs" stroke="#111" stroke-width="0.3">Bringal</text>
<text x="209.58" y="264.90" font-family="Liberation Sans" font-size="12.5" fill="#111" textLength="13.14" lengthAdjust="spacingAndGlyphs" stroke="#111" stroke-width="0.3">23</text>
<text x="264.95" y="264.90" font-family="Liberation Sans" font-size="12.5" fill="#111" textLength="19.71" lengthAdjust="spacingAndGlyphs" stroke="#111" stroke-width="0.3">230</text>
<text x="78.15" y="282.90" font-family="Liberation Sans" font-size="12.5" fill="#111" textLength="6.57" lengthAdjust="spacingAndGlyphs" stroke="#111" stroke-width="0.3">3</text>
<text x="89.73" y="282.90" font-family="Liberation Sans" font-size="12.5" fill="#111" textLength="40.05" lengthAdjust="spacingAndGlyphs" stroke="#111" stroke-width="0.3">Tomato</text>
<text x="209.65" y="282.90" font-family="Liberation Sans" font-size="12.5" fill="#111" textLength="13.14" lengthAdjust="spacingAndGlyphs" stroke="#111" stroke-width="0.3">52</text>
<text x="264.95" y="282.90" font-family="Liberation Sans" font-size="12.5" fill="#111" textLength="19.71" lengthAdjust="spacingAndGlyphs" stroke="#111" stroke-width="0.3">520</text>
<text x="77.98" y="300.90" font-family="Liberation Sans" font-size="12.5" fill="#111" textLength="6.57" lengthAdjust="spacingAndGlyphs" stroke="#111" stroke-width="0.3">4</text>
<text x="89.73" y="300.90" font-family="Liberation Sans" font-size="12.5" fill="#111" textLength="40.05" lengthAdjust="spacingAndGlyphs" stroke="#111" stroke-width="0.3">Tomato</text>
<text x="209.65" y="300.90" font-family="Liberation Sans" font-size="12.5" fill="#111" textLength="13.14" lengthAdjust="spacingAndGlyphs" stroke="#111" stroke-width="0.3">47</text>
<text x="264.95" y="300.90" font-family="Liberation Sans" font-size="12.5" fill="#111" textLength="19.71" lengthAdjust="spacingAndGlyphs" stroke="#111" stroke-width="0.3">470</text>
<text x="78.13" y="317.90" font-family="Liberation Sans" font-size="12.5" fill="#111" textLength="6.57" lengthAdjust="spacingAndGlyphs" stroke="#111" stroke-width="0.3">5</text>
<text x="89.46" y="317.90" font-family="Liberation Sans" font-size="12.5" fill="#111" textLength="70.26" lengthAdjust="spacingAndGlyphs" stroke="#111" stroke-width="0.3">Sweet Potato</text>
<text x="209.52" y="317.90" font-family="Liberation Sans" font-size="12.5" fill="#111" textLength="13.14" lengthAdjust="spacingAndGlyphs" stroke="#111" stroke-width="0.3">50</text>
<text x="264.95" y="317.90" font-family="Liberation Sans" font-size="12.5" fill="#111" textLength="19.71" lengthAdjust="spacingAndGlyphs" stroke="#111" stroke-width="0.3">500</text>
<text x="78.15" y="335.90" font-family="Liberation Sans" font-size="12.5" fill="#111" textLength="6.57" lengthAdjust="spacingAndGlyphs" stroke="#111" stroke-width="0.3">6</text>
<text x="89.03" y="335.90" font-family="Liberation Sans" font-size="12.5" fill="#111" textLength="44.65" lengthAdjust="spacingAndGlyphs" stroke="#111" stroke-width="0.3">Beetroot</text>
<text x="209.41" y="335.90" font-family="Liberation Sans" font-size="12.5" fill="#111" textLength="13.14" lengthAdjust="spacingAndGlyphs" stroke="#111" stroke-width="0.3">54</text>
<text x="264.95" y="335.90" font-family="Liberation Sans" font-size="12.5" fill="#111" textLength="19.71" lengthAdjust="spacingAndGlyphs" stroke="#111" stroke-width="0.3">540</text>
<text x="78.22" y="353.90" font-family="Liberation Sans" font-size="12.5" fill="#111" textLength="6.57" lengthAdjust="spacingAndGlyphs" stroke="#111" stroke-width="0.3">7</text>
<text x="89.73" y="353.90" font-family="Liberation Sans" font-size="12.5" fill="#111" textLength="40.05" lengthAdjust="spacingAndGlyphs" stroke="#111" stroke-width="0.3">Tomato</text>
<text x="209.65" y="353.90" font-family="Liberation Sans" font-size="12.5" fill="#111" textLength="13.14" lengthAdjust="spacingAndGlyphs" stroke="#111" stroke-width="0.3">57</text>
<text x="264.95" y="353.90" font-family="Liberation Sans" font-size="12.5" fill="#111" textLength="19.71" lengthAdjust="spacingAndGlyphs" stroke="#111" stroke-width="0.3">570</text>
<text x="78.14" y="371.90" font-family="Liberation Sans" font-size="12.5" fill="#111" textLength="6.57" lengthAdjust="spacingAndGlyphs" stroke="#111" stroke-width="0.3">8</text>
<text x="89.40" y="371.90" font-family="Liberation Sans" font-size="12.5" fill="#111" textLength="54.49" lengthAdjust="spacingAndGlyphs" stroke="#111" stroke-width="0.3">Cucumber</text>
<text x="209.64" y="371.90" font-family="Liberation Sans" font-size="12.5" fill="#111" textLength="13.14" lengthAdjust="spacingAndGlyphs" stroke="#111" stroke-width="0.3">61</text>
<text x="264.95" y="371.90" font-family="Liberation Sans" font-size="12.5" fill="#111" textLength="19.71" lengthAdjust="spacingAndGlyphs" stroke="#111" stroke-width="0.3">610</text>
<text x="78.19" y="389.90" font-family="Liberation Sans" font-size="12.5" fill="#111" textLength="6.57" lengthAdjust="spacingAndGlyphs" stroke="#111" stroke-width="0.3">9</text>
<text x="89.03" y="389.90" font-family="Liberation Sans" font-size="12.5" fill="#111" textLength="36.12" lengthAdjust="spacingAndGlyphs" stroke="#111" stroke-width="0.3">Lemon</text>
<text x="209.41" y="389.90" font-family="Liberation Sans" font-size="12.5" fill="#111" textLength="13.14" lengthAdjust="spacingAndGlyphs" stroke="#111" stroke-width="0.3">64</text>
<text x="264.95" y="389.90" font-family="Liberation Sans" font-size="12.5" fill="#111" textLength="19.71" lengthAdjust="spacingAndGlyphs" stroke="#111" stroke-width="0.3">640</text>
<text x="412.83" y="246.90" font-family="Liberation Sans" font-size="12.5" fill="#111" textLength="44.65" lengthAdjust="spacingAndGlyphs" stroke="#111" stroke-width="0.3">Beetroot</text>
<text x="412.83" y="264.90" font-family="Liberation Sans" font-size="12.5" fill="#111" textLength="36.77" lengthAdjust="spacingAndGlyphs" stroke="#111" stroke-width="0.3">Bringal</text>
<text x="413.20" y="282.90" font-family="Liberation Sans" font-size="12.5" fill="#111" textLength="54.49" lengthAdjust="spacingAndGlyphs" stroke="#111" stroke-width="0.3">Cucumber</text>
<text x="412.83" y="300.90" font-family="Liberation Sans" font-size="12.5" fill="#111" textLength="36.12" lengthAdjust="spacingAndGlyphs" stroke="#111" stroke-width="0.3">Lemon</text>
<text x="413.26" y="317.90" font-family="Liberation Sans" font-size="12.5" fill="#111" textLength="70.26" lengthAdjust="spacingAndGlyphs" stroke="#111" stroke-width="0.3">Sweet Potato</text>
<text x="413.53" y="335.90" font-family="Liberation Sans" font-size="12.5" fill="#111" textLength="40.05" lengthAdjust="spacingAndGlyphs" stroke="#111" stroke-width="0.3">Tomato</text>
<g fill="none" stroke="#d6d6d6" stroke-width="1.1"><path d="M22.5 428 L18.5 431.8 L22.5 435.6"/><path d="M41.5 428 L45.5 431.8 L41.5 435.6"/></g>
<g fill="#e6e6e6"><circle cx="63" cy="431.6" r="1.1"/><circle cx="66.2" cy="431.6" r="1.1"/><circle cx="69.4" cy="431.6" r="1.1"/></g>
<text x="89.25" y="436.00" font-family="Liberation Sans" font-size="10.4" fill="#f0f0f0" textLength="90.51" lengthAdjust="spacingAndGlyphs" stroke="#f0f0f0" stroke-width="0.14">Valuetotext function</text>
<text x="198.56" y="434.00" font-family="Liberation Sans" font-size="10.7" fill="#1e1e1e" textLength="75.44" lengthAdjust="spacingAndGlyphs" stroke="#1e1e1e" stroke-width="0.3">Unique function</text>
<text x="292.15" y="435.70" font-family="Liberation Sans" font-size="10.4" fill="#f0f0f0" textLength="65.43" lengthAdjust="spacingAndGlyphs" stroke="#f0f0f0" stroke-width="0.14">Findb function</text>
<g fill="#e6e6e6"><circle cx="386" cy="431.6" r="1.1"/><circle cx="389.2" cy="431.6" r="1.1"/><circle cx="392.4" cy="431.6" r="1.1"/></g>
<path d="M408.3 431.6 H417 M412.6 427.3 V436" stroke="#e0e0e0" stroke-width="1.1"/>
<g fill="#d6d6d6"><circle cx="436" cy="428.6" r="0.9"/><circle cx="436" cy="431.6" r="0.9"/><circle cx="436" cy="434.6" r="0.9"/></g>
<path d="M456.2 428.3 L451.3 431.5 L456.2 434.7 Z" fill="#b8b8b8"/>
<path d="M699.2 428.3 L704.1 431.5 L699.2 434.7 Z" fill="#9c9c9c"/>
<path d="M710.8 188.3 L714 183.2 L717.2 188.3 Z" fill="#a8a8a8"/>
<path d="M710.8 413 L714 418 L717.2 413 Z" fill="#a8a8a8"/>
<text x="8.92" y="454.50" font-family="Liberation Sans" font-size="8.2" fill="#c4c4c4" textLength="20.60" lengthAdjust="spacingAndGlyphs" stroke="#c4c4c4" stroke-width="0.14">Ready</text>
<g fill="none" stroke="#d8d8d8" stroke-width="1"><path d="M43 447.8 H53 V450 H43 Z M43 450 V455.5 H47.5"/><circle cx="50" cy="452.8" r="2.4"/><path d="M49.5 451.8 V453 H50.8"/></g>
<g fill="none" stroke="#d8d8d8" stroke-width="1"><circle cx="70" cy="447.5" r="1.1"/><path d="M66 449.5 H74 M70 449.5 V452.5 L67.5 456 M70 452.5 L72 453.5"/><path d="M72 453 L75.5 456.5 M75.5 453 L72 456.5"/></g>
<text x="78.61" y="454.50" font-family="Liberation Sans" font-size="8.4" font-weight="bold" fill="#f0f0f0" textLength="90.65" lengthAdjust="spacingAndGlyphs" >Accessibility: Investigate</text>
<g fill="none" stroke="#e8e8e8" stroke-width="1"><rect x="507.9" y="446.8" width="9.3" height="8.6" rx="1"/><path d="M507.9 449.7 H517.2 M507.9 452.5 H517.2 M511 446.8 V455.4 M514.1 446.8 V455.4"/></g>
<g fill="none" stroke="#d8d8d8" stroke-width="1"><rect x="536.8" y="446.9" width="10" height="8.7" rx="0.8"/><rect x="539.5" y="448.8" width="4.6" height="5"/><path d="M540.6 450.5 V452.5 H543" stroke-width="0.8"/></g>
<g fill="none" stroke="#d8d8d8" stroke-width="1"><path d="M565.5 446.9 V455.6 H575.6 V446.9 H572.8 V451 H568.5 V446.9 M570.6 447 V450.5 M565.5 452.8 H575.6"/></g>
<path d="M590 451.5 H594.5" stroke="#bdbdbd" stroke-width="1"/>
<path d="M673.8 451.5 H680.2 M677 448.3 V454.7" stroke="#bdbdbd" stroke-width="1"/>
<text x="687.89" y="455.00" font-family="Liberation Sans" font-size="8.6" fill="#e6e6e6" textLength="20.39" lengthAdjust="spacingAndGlyphs" stroke="#e6e6e6" stroke-width="0.14">100%</text>
</svg>
</body></html>
